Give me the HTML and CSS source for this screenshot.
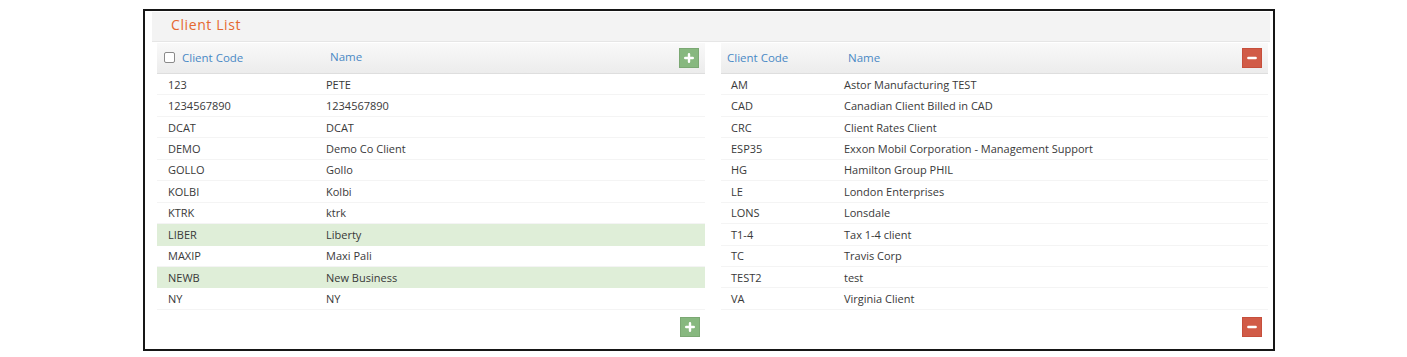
FILE: index.html
```html
<!DOCTYPE html>
<html>
<head>
<meta charset="utf-8">
<link rel="stylesheet" href="styles.css">
</head>
<body>
<div class="frame">
  <div class="panel">
    <div class="panel-title">Client List</div>
    <div class="panel-body">
      <div class="table left">
        <div class="thead">
          <div class="th code"><span class="cb"></span>Client Code</div>
          <div class="th name">Name</div>
          <button class="btn add"><svg viewBox="0 0 10 10" width="10" height="10"><path d="M5 1.2v7.6M1.2 5h7.6" stroke="#fff" stroke-width="2.4" stroke-linecap="round"/></svg></button>
        </div>
        <div class="row"><div class="td">123</div><div class="td">PETE</div></div>
        <div class="row"><div class="td">1234567890</div><div class="td">1234567890</div></div>
        <div class="row"><div class="td">DCAT</div><div class="td">DCAT</div></div>
        <div class="row"><div class="td">DEMO</div><div class="td">Demo Co Client</div></div>
        <div class="row"><div class="td">GOLLO</div><div class="td">Gollo</div></div>
        <div class="row"><div class="td">KOLBI</div><div class="td">Kolbi</div></div>
        <div class="row"><div class="td">KTRK</div><div class="td">ktrk</div></div>
        <div class="row sel"><div class="td">LIBER</div><div class="td">Liberty</div></div>
        <div class="row"><div class="td">MAXIP</div><div class="td">Maxi Pali</div></div>
        <div class="row sel"><div class="td">NEWB</div><div class="td">New Business</div></div>
        <div class="row"><div class="td">NY</div><div class="td">NY</div></div>
        <div class="tfoot">
          <button class="btn add"><svg viewBox="0 0 10 10" width="10" height="10"><path d="M5 1.2v7.6M1.2 5h7.6" stroke="#fff" stroke-width="2.4" stroke-linecap="round"/></svg></button>
        </div>
      </div>
      <div class="table right">
        <div class="thead">
          <div class="th code">Client Code</div>
          <div class="th name">Name</div>
          <button class="btn del"><svg viewBox="0 0 10 10" width="10" height="10"><path d="M1.4 5h7.2" stroke="#fff" stroke-width="2.6" stroke-linecap="round"/></svg></button>
        </div>
        <div class="row"><div class="td">AM</div><div class="td">Astor Manufacturing TEST</div></div>
        <div class="row"><div class="td">CAD</div><div class="td">Canadian Client Billed in CAD</div></div>
        <div class="row"><div class="td">CRC</div><div class="td">Client Rates Client</div></div>
        <div class="row"><div class="td">ESP35</div><div class="td">Exxon Mobil Corporation - Management Support</div></div>
        <div class="row"><div class="td">HG</div><div class="td">Hamilton Group PHIL</div></div>
        <div class="row"><div class="td">LE</div><div class="td">London Enterprises</div></div>
        <div class="row"><div class="td">LONS</div><div class="td">Lonsdale</div></div>
        <div class="row"><div class="td">T1-4</div><div class="td">Tax 1-4 client</div></div>
        <div class="row"><div class="td">TC</div><div class="td">Travis Corp</div></div>
        <div class="row"><div class="td">TEST2</div><div class="td">test</div></div>
        <div class="row"><div class="td">VA</div><div class="td">Virginia Client</div></div>
        <div class="tfoot">
          <button class="btn del"><svg viewBox="0 0 10 10" width="10" height="10"><path d="M1.4 5h7.2" stroke="#fff" stroke-width="2.6" stroke-linecap="round"/></svg></button>
        </div>
      </div>
    </div>
  </div>
</div>
</body>
</html>
```
FILE: styles.css
```css
* { box-sizing: border-box; }
html, body { margin: 0; padding: 0; background: #fff; }
body {
  font-family: "Open Sans", "Liberation Sans", sans-serif;
  font-size: 11px;
  color: #393939;
}
.frame {
  margin: 9px 0 0 143px;
  width: 1132px;
  height: 342px;
  border: 2px solid #161616;
  padding: 1px 3px 0 7px;
}
.panel-title {
  height: 30px;
  background: #f3f3f3;
  border-bottom: 1px solid #e6e6e6;
  color: #e5672e;
  font-size: 14px;
  letter-spacing: 0.6px;
  line-height: 26px;
  padding-left: 19px;
}
.panel-body {
  display: grid;
  grid-template-columns: 548px 547px;
  column-gap: 16px;
  padding: 1px 2px 0 5px;
}
.table { display: flex; flex-direction: column; }
.thead {
  height: 31px;
  display: grid;
  align-items: center;
  background: linear-gradient(#f9f9f9, #ececec);
  border-bottom: 1px solid #dedede;
  color: #4a89c5;
  font-size: 11.5px;
}
.left .thead { grid-template-columns: 158px 1fr auto; }
.right .thead { grid-template-columns: 113px 1fr auto; }
.th { display: flex; align-items: center; margin-top: -2px; }
.left .th.code { padding-left: 7px; }
.left .th.name { padding-left: 15px; margin-top: -4px; }
.right .th.code { padding-left: 6px; }
.right .th.name { padding-left: 14px; }
.cb {
  width: 11px;
  height: 11px;
  border: 1px solid #8a8a8a;
  border-radius: 2px;
  background: #fff;
  margin-right: 7px;
}
.btn {
  width: 20px;
  height: 20px;
  border: 0;
  padding: 0;
  margin-right: 6px;
  display: flex;
  align-items: center;
  justify-content: center;
  cursor: pointer;
}
.thead .btn { margin-top: -1px; }
.btn.add { background: #87b87f; box-shadow: inset 0 0 0 1px #7ba873; }
.btn.del { background: #d15b47; box-shadow: inset 0 0 0 1px #c64f3c; }
.row {
  height: 21.45px;
  display: grid;
  align-items: center;
  border-bottom: 1px solid #f4f4f4;
}
.left .row { grid-template-columns: 158px 1fr; }
.right .row { grid-template-columns: 113px 1fr; }
.left .td { padding-left: 11px; }
.right .td { padding-left: 10px; }
.row.sel { background: #dfeed8; border-bottom-color: #dfeed8; }
.tfoot {
  display: flex;
  justify-content: flex-end;
  padding-top: 7px;
}
.left .tfoot .btn { margin-right: 5px; }
```
